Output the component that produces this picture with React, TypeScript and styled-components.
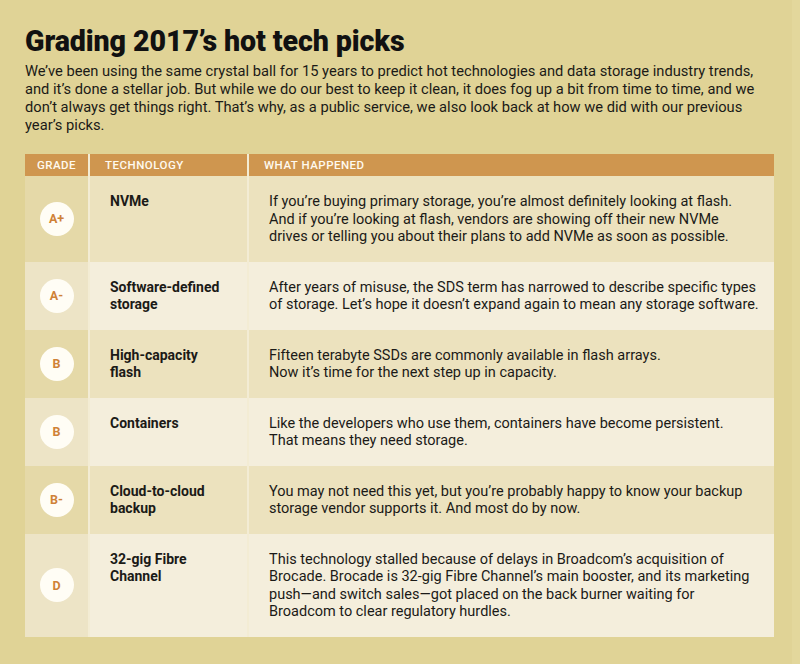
import React from "react";
import styled, { createGlobalStyle } from "styled-components";

const Global = createGlobalStyle`
  html, body { margin: 0; padding: 0; background: #e0d396; }
  body { font-family: Roboto, "Liberation Sans", Arial, sans-serif; color: #1b1a17; }
`;

const Page = styled.div`
  width: 800px;
  height: 664px;
  box-sizing: border-box;
  padding: 25px 26px 0 25px;
  background: #e0d396;
  border-right: 8px solid #e3d79c;
  overflow: hidden;
`;

const Title = styled.h1`
  margin: 0;
  font-size: 28.6px;
  line-height: 32px;
  font-weight: 900;
  letter-spacing: -0.1px;
  color: #111;
`;

const Intro = styled.p`
  margin: 5px 0 0;
  font-size: 14.7px;
  line-height: 18px;
  color: #1b1a17;
  white-space: nowrap;
`;

const Table = styled.div`
  margin-top: 20px;
  width: 749px;
  display: flex;
  flex-direction: column;
`;

const Row = styled.div`
  display: grid;
  grid-template-columns: 63px 157px 1fr;
  column-gap: 2px;
  background: #f3ecd4;
`;

const HeadCell = styled.div<{ $center?: boolean }>`
  background: #cf964f;
  color: #fffaf0;
  font-size: 11.5px;
  font-weight: 500;
  letter-spacing: 0.5px;
  height: 22px;
  line-height: 22px;
  padding-left: ${(p) => (p.$center ? "0" : "15px")};
  text-align: ${(p) => (p.$center ? "center" : "left")};
`;

const GradeCell = styled.div<{ $dark: boolean }>`
  background: ${(p) => (p.$dark ? "#e5d9a8" : "#ede4c6")};
  display: flex;
  align-items: center;
  justify-content: center;
`;

const Cell = styled.div<{ $dark: boolean; $bold?: boolean }>`
  background: ${(p) => (p.$dark ? "#ece2be" : "#f4eedc")};
  padding: 17px 6px 16px 20px;
  font-size: ${(p) => (p.$bold ? "14px" : "14.5px")};
  font-weight: ${(p) => (p.$bold ? 700 : 400)};
  line-height: 17.5px;
  color: #1b1a17;
  white-space: nowrap;
`;

const Badge = styled.div`
  width: 34px;
  height: 34px;
  border-radius: 50%;
  background: #fffdf5;
  color: #cf8238;
  font-size: 12.5px;
  font-weight: 700;
  display: flex;
  align-items: center;
  justify-content: center;
`;

const rows: { grade: string; tech: string[]; text: string[] }[] = [
  {
    grade: "A+",
    tech: ["NVMe"],
    text: [
      "If you\u2019re buying primary storage, you\u2019re almost definitely looking at flash.",
      "And if you\u2019re looking at flash, vendors are showing off their new NVMe",
      "drives or telling you about their plans to add NVMe as soon as possible.",
    ],
  },
  {
    grade: "A-",
    tech: ["Software-defined", "storage"],
    text: [
      "After years of misuse, the SDS term has narrowed to describe specific types",
      "of storage. Let\u2019s hope it doesn\u2019t expand again to mean any storage software.",
    ],
  },
  {
    grade: "B",
    tech: ["High-capacity", "flash"],
    text: [
      "Fifteen terabyte SSDs are commonly available in flash arrays.",
      "Now it\u2019s time for the next step up in capacity.",
    ],
  },
  {
    grade: "B",
    tech: ["Containers"],
    text: [
      "Like the developers who use them, containers have become persistent.",
      "That means they need storage.",
    ],
  },
  {
    grade: "B-",
    tech: ["Cloud-to-cloud", "backup"],
    text: [
      "You may not need this yet, but you\u2019re probably happy to know your backup",
      "storage vendor supports it. And most do by now.",
    ],
  },
  {
    grade: "D",
    tech: ["32-gig Fibre", "Channel"],
    text: [
      "This technology stalled because of delays in Broadcom\u2019s acquisition of",
      "Brocade. Brocade is 32-gig Fibre Channel\u2019s main booster, and its marketing",
      "push\u2014and switch sales\u2014got placed on the back burner waiting for",
      "Broadcom to clear regulatory hurdles.",
    ],
  },
];

const lines = (arr: string[]) =>
  arr.map((l, i) => (
    <React.Fragment key={i}>
      {i > 0 && <br />}
      {l}
    </React.Fragment>
  ));

export default function App() {
  return (
    <Page>
      <Global />
      <Title>Grading 2017’s hot tech picks</Title>
      <Intro>
        We’ve been using the same crystal ball for 15 years to predict hot technologies and data storage industry trends,
        <br />
        and it’s done a stellar job. But while we do our best to keep it clean, it does fog up a bit from time to time, and we
        <br />
        don’t always get things right. That’s why, as a public service, we also look back at how we did with our previous
        <br />
        year’s picks.
      </Intro>
      <Table>
        <Row>
          <HeadCell $center>GRADE</HeadCell>
          <HeadCell>TECHNOLOGY</HeadCell>
          <HeadCell>WHAT HAPPENED</HeadCell>
        </Row>
        {rows.map((r, i) => {
          const dark = i % 2 === 0;
          return (
            <Row key={i}>
              <GradeCell $dark={dark}>
                <Badge>{r.grade}</Badge>
              </GradeCell>
              <Cell $dark={dark} $bold>
                {lines(r.tech)}
              </Cell>
              <Cell $dark={dark}>{lines(r.text)}</Cell>
            </Row>
          );
        })}
      </Table>
    </Page>
  );
}
